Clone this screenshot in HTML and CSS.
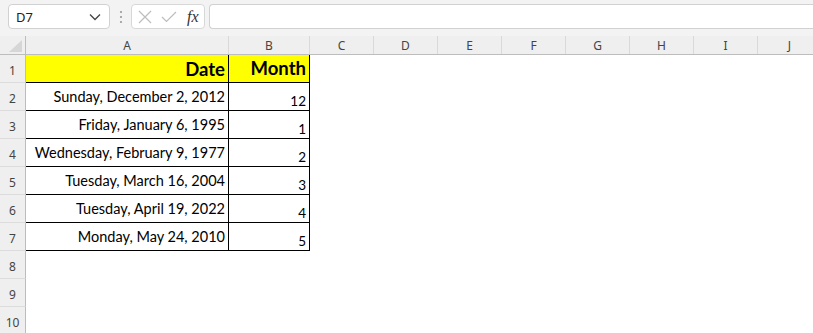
FILE: index.html
```html
<!DOCTYPE html>
<html lang="en">
<head>
    <meta charset="UTF-8">
    <title>Sheet</title>
    <link rel="stylesheet" href="styles.css">
</head>
<body>
    <div class="toolbar">
        <div class="namebox">
            <span>D7</span>
            <svg width="12" height="8" viewBox="0 0 12 8"><path d="M1 1.5 L6 6.5 L11 1.5" fill="none" stroke="#444" stroke-width="1.3"/></svg>
        </div>
        <div class="grip">
            <svg width="4" height="14" viewBox="0 0 4 14"><circle cx="2" cy="2" r="1.1" fill="#999"/><circle cx="2" cy="7" r="1.1" fill="#999"/><circle cx="2" cy="12" r="1.1" fill="#999"/></svg>
        </div>
        <div class="fnbox">
            <svg width="14" height="14" viewBox="0 0 14 14"><path d="M1 1 L13 13 M13 1 L1 13" stroke="#bdbdbd" stroke-width="1.2" fill="none"/></svg>
            <svg width="16" height="12" viewBox="0 0 16 12"><path d="M1 6 L5.5 10.5 L15 1" stroke="#bdbdbd" stroke-width="1.2" fill="none"/></svg>
            <span class="fx">fx</span>
        </div>
        <div class="formula"></div>
    </div>

    <div class="colheads">
        <div class="corner">
            <svg width="14" height="12" viewBox="0 0 14 12"><path d="M13 0 L13 12 L0 12 Z" fill="#d6d6d6"/></svg>
        </div>
        <div class="colhead col-a">A</div>
        <div class="colhead col-b">B</div>
        <div class="colhead">C</div>
        <div class="colhead">D</div>
        <div class="colhead">E</div>
        <div class="colhead">F</div>
        <div class="colhead">G</div>
        <div class="colhead">H</div>
        <div class="colhead">I</div>
        <div class="colhead">J</div>
    </div>

    <div class="row">
        <div class="rowhead">1</div>
        <div class="cell date title">Date</div>
        <div class="cell month title">Month</div>
    </div>
    <div class="row">
        <div class="rowhead">2</div>
        <div class="cell date">Sunday, December 2, 2012</div>
        <div class="cell month">12</div>
    </div>
    <div class="row">
        <div class="rowhead">3</div>
        <div class="cell date">Friday, January 6, 1995</div>
        <div class="cell month">1</div>
    </div>
    <div class="row">
        <div class="rowhead">4</div>
        <div class="cell date">Wednesday, February 9, 1977</div>
        <div class="cell month">2</div>
    </div>
    <div class="row">
        <div class="rowhead">5</div>
        <div class="cell date">Tuesday, March 16, 2004</div>
        <div class="cell month">3</div>
    </div>
    <div class="row">
        <div class="rowhead">6</div>
        <div class="cell date">Tuesday, April 19, 2022</div>
        <div class="cell month">4</div>
    </div>
    <div class="row">
        <div class="rowhead">7</div>
        <div class="cell date">Monday, May 24, 2010</div>
        <div class="cell month">5</div>
    </div>
    <div class="row">
        <div class="rowhead">8</div>
    </div>
    <div class="row">
        <div class="rowhead">9</div>
    </div>
    <div class="row">
        <div class="rowhead">10</div>
    </div>
</body>
</html>
```

FILE: styles.css
```css
*{
    padding: 0;
    margin: 0;
    box-sizing: border-box;
}

body{
    width: 813px;
    height: 333px;
    overflow: hidden;
    background-color: #fff;
    font-family: "Noto Sans", sans-serif;
}

.toolbar {
    display: flex;
    align-items: flex-start;
    height: 36px;
    padding: 4px 0 0 8px;
    background-color: #f3f3f3;
}
.namebox {
    display: flex;
    align-items: center;
    justify-content: space-between;
    width: 102px;
    height: 25px;
    padding: 0 8px 0 7px;
    background-color: #fff;
    border: 1px solid #d1d1d1;
    border-radius: 4px;
    font-size: 13px;
    color: #222;
}
.grip {
    display: flex;
    align-items: center;
    justify-content: center;
    width: 21px;
    height: 25px;
}
.fnbox {
    display: flex;
    align-items: center;
    gap: 9px;
    width: 74px;
    height: 25px;
    padding-left: 6px;
    background-color: #fff;
    border: 1px solid #d8d8d8;
    border-radius: 4px;
}
.fx {
    font-family: "Liberation Serif", serif;
    font-style: italic;
    font-size: 16px;
    color: #333;
    margin-left: 1px;
}
.formula {
    flex: 1;
    height: 25px;
    margin-left: 4px;
    background-color: #fff;
    border: 1px solid #d1d1d1;
    border-right: none;
    border-radius: 4px 0 0 4px;
}

.colheads {
    display: flex;
    height: 19px;
    background-color: #efefef;
    border-bottom: 1px solid #bdbdbd;
}
.corner {
    display: flex;
    align-items: flex-end;
    justify-content: flex-end;
    width: 26px;
    flex: none;
    padding: 0 2px 2px 0;
    border-right: 1px solid #bdbdbd;
}
.colhead {
    width: 64px;
    flex: none;
    text-align: center;
    font-size: 12px;
    line-height: 19px;
    color: #444;
    border-right: 1px solid #d9d9d9;
}
.col-a {
    width: 203px;
}
.col-b {
    width: 81px;
}

.row {
    display: flex;
    height: 28px;
}
.rowhead {
    display: flex;
    align-items: flex-end;
    justify-content: center;
    width: 26px;
    flex: none;
    padding-bottom: 3px;
    background-color: #efefef;
    border-right: 1px solid #bdbdbd;
    border-bottom: 1px solid #dcdcdc;
    font-size: 12px;
    color: #444;
}
.cell {
    display: flex;
    justify-content: flex-end;
    flex: none;
    border-right: 1px solid #000;
    border-bottom: 1px solid #000;
    font-family: Lato, "Liberation Sans", sans-serif;
    font-size: 14.5px;
    color: #000;
}
.date {
    width: 203px;
    align-items: center;
    padding-right: 3px;
}
.month {
    width: 81px;
    align-items: flex-end;
    padding: 0 3px 1px 0;
    font-size: 13.5px;
}
.title {
    align-items: center;
    background-color: #ffff00;
    font-weight: bold;
    font-size: 18.5px;
}
```
